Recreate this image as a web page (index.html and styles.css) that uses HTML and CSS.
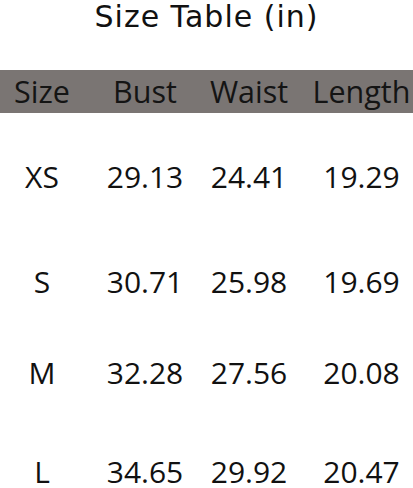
FILE: index.html
```html
<!DOCTYPE html>
<html lang="en">
<head>
<meta charset="utf-8">
<title>Size Table (in)</title>
<link rel="stylesheet" href="styles.css">
</head>
<body>
<div class="page">
  <h1 class="title">Size Table (in)</h1>
  <div class="table">
    <div class="row head">
      <div class="cell c1">Size</div>
      <div class="cell c2">Bust</div>
      <div class="cell c3">Waist</div>
      <div class="cell c4">Length</div>
    </div>
    <div class="row data r-xs">
      <div class="cell c1">XS</div>
      <div class="cell c2">29.13</div>
      <div class="cell c3">24.41</div>
      <div class="cell c4">19.29</div>
    </div>
    <div class="row data r-s">
      <div class="cell c1">S</div>
      <div class="cell c2">30.71</div>
      <div class="cell c3">25.98</div>
      <div class="cell c4">19.69</div>
    </div>
    <div class="row data r-m">
      <div class="cell c1">M</div>
      <div class="cell c2">32.28</div>
      <div class="cell c3">27.56</div>
      <div class="cell c4">20.08</div>
    </div>
    <div class="row data r-l">
      <div class="cell c1">L</div>
      <div class="cell c2">34.65</div>
      <div class="cell c3">29.92</div>
      <div class="cell c4">20.47</div>
    </div>
  </div>
</div>
</body>
</html>
```

FILE: styles.css
```css
html, body {
  margin: 0;
  padding: 0;
  background: #ffffff;
}

.page {
  width: 413px;
  height: 488px;
  overflow: hidden;
  color: #111111;
}

.title {
  margin: 0;
  height: 34px;
  font-family: "DejaVu Sans", sans-serif;
  font-weight: normal;
  font-size: 30px;
  line-height: 34px;
  letter-spacing: 1px;
  text-align: center;
  color: #111111;
}

.table {
  margin-top: 36px;
  font-family: "Open Sans", "Noto Sans", sans-serif;
  font-size: 30px;
}

.row {
  display: grid;
  grid-template-columns: 84px 122px 86px 121px;
}

.cell {
  text-align: center;
  white-space: nowrap;
}

.c4 {
  padding-left: 18px;
}

.head {
  height: 43px;
  line-height: 43px;
  background: #7a7573;
  color: #141414;
  font-size: 30.5px;
}

.data {
  line-height: 30px;
  height: 30px;
}

.r-xs { margin-top: 49px; }
.r-s  { margin-top: 75px; }
.r-m  { margin-top: 61px; }
.r-l  { margin-top: 69px; }
```
